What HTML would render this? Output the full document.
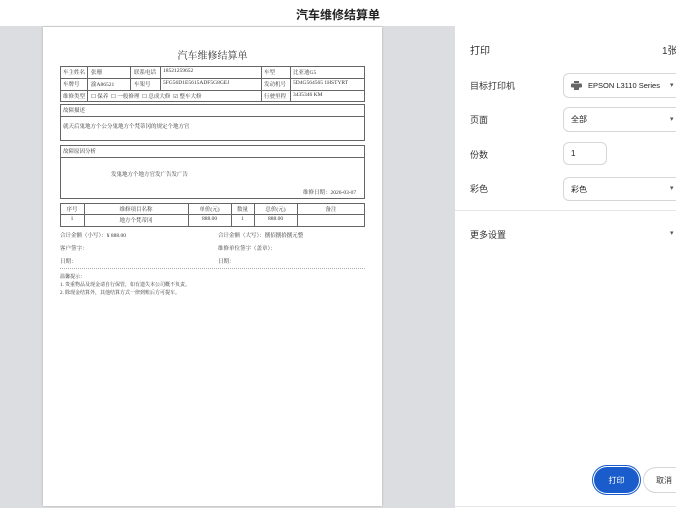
<!DOCTYPE html>
<html><head><meta charset="utf-8"><style>
*{margin:0;padding:0;box-sizing:border-box}
body{width:676px;height:508px;overflow:hidden;background:#fff;font-family:"Liberation Sans","Noto Sans CJK SC",sans-serif;position:relative;color:#222}
.a{position:absolute;white-space:nowrap}
.s{font-family:"Liberation Serif","Noto Serif CJK SC",serif;font-size:5.5px;color:#333}
#gray{position:absolute;left:0;top:26px;width:455px;height:482px;background:#dcdde0}
#paper{position:absolute;left:43px;top:27px;width:339px;height:479px;background:#fff;box-shadow:0 0 2px #aaa}
.b{position:absolute;border:1px solid #666}
.l{position:absolute;background:#666}
.sel{position:absolute;border:1px solid #d6d6d6;border-radius:6px;font-size:8px;padding-left:7px;display:flex;align-items:center;color:#222}
.lab{position:absolute;font-size:9px;color:#333}
.ar{position:absolute;left:670px;font-size:7px;color:#555}
</style></head><body>
<div class="a" style="left:0;width:676px;text-align:center;top:6px;font-size:12px;font-weight:bold">汽车维修结算单</div>
<div id="gray"></div>
<div id="paper"></div>
<div class="a" style="left:43px;width:339px;text-align:center;top:47px;font-size:10px;font-family:'Liberation Serif','Noto Serif CJK SC',serif;color:#333">汽车维修结算单</div>
<div class="b" style="left:60px;top:66px;width:305px;height:36px"></div>
<div class="l" style="left:60px;top:78px;width:305px;height:1px"></div>
<div class="l" style="left:60px;top:90px;width:305px;height:1px"></div>
<div class="l" style="left:87px;top:66px;width:1px;height:36px"></div>
<div class="l" style="left:130px;top:66px;width:1px;height:24px"></div>
<div class="l" style="left:160px;top:66px;width:1px;height:24px"></div>
<div class="l" style="left:261px;top:66px;width:1px;height:36px"></div>
<div class="l" style="left:290px;top:66px;width:1px;height:36px"></div>
<div class="a s" style="left:63px;top:68px">车主姓名</div><div class="a s" style="left:91px;top:68px">张珊</div><div class="a s" style="left:134px;top:68px">联系电话</div><div class="a s" style="left:163px;top:68px">18521259652</div><div class="a s" style="left:264px;top:68px">车型</div><div class="a s" style="left:293px;top:68px">比亚迪G5</div>
<div class="a s" style="left:63px;top:80px">车牌号</div><div class="a s" style="left:91px;top:80px">渝A86521</div><div class="a s" style="left:134px;top:80px">车架号</div><div class="a s" style="left:163px;top:80px">5FG56D1E5615ADF5G8GEJ</div><div class="a s" style="left:264px;top:80px">发动机号</div><div class="a s" style="left:293px;top:80px">5D4G564565 1HSTYRT</div>
<div class="a s" style="left:63px;top:92px">维修类型</div>
<div class="a s" style="left:91px;top:92px">☐ 保养 &nbsp;☐ 一般修理 &nbsp;☐ 总成大修 &nbsp;☑ 整车大修</div>
<div class="a s" style="left:264px;top:92px">行驶里程</div><div class="a s" style="left:293px;top:92px">3435346 KM</div>
<div class="b" style="left:60px;top:104px;width:305px;height:37px"></div>
<div class="l" style="left:60px;top:116px;width:305px;height:1px"></div>
<div class="a s" style="left:63px;top:106px">故障描述</div>
<div class="a s" style="left:63px;top:122px">就天后鬼地方个公分鬼地方个梵蒂冈的规定个地方官</div>
<div class="b" style="left:60px;top:145px;width:305px;height:54px"></div>
<div class="l" style="left:60px;top:157px;width:305px;height:1px"></div>
<div class="a s" style="left:63px;top:147px">故障原因分析</div>
<div class="a s" style="left:111px;top:170px">发鬼地方个地方官发广告发广告</div>
<div class="a s" style="left:303px;top:188px">维修日期：2026-03-07</div>
<div class="b" style="left:60px;top:203px;width:305px;height:24px"></div>
<div class="l" style="left:60px;top:214px;width:305px;height:1px"></div>
<div class="l" style="left:84px;top:203px;width:1px;height:24px"></div>
<div class="l" style="left:188px;top:203px;width:1px;height:24px"></div>
<div class="l" style="left:231px;top:203px;width:1px;height:24px"></div>
<div class="l" style="left:254px;top:203px;width:1px;height:24px"></div>
<div class="l" style="left:297px;top:203px;width:1px;height:24px"></div>
<div class="a s" style="left:60px;width:24px;text-align:center;top:205px">序号</div>
<div class="a s" style="left:84px;width:104px;text-align:center;top:205px">维修项目名称</div>
<div class="a s" style="left:188px;width:43px;text-align:center;top:205px">单价(元)</div>
<div class="a s" style="left:231px;width:23px;text-align:center;top:205px">数量</div>
<div class="a s" style="left:254px;width:43px;text-align:center;top:205px">总价(元)</div>
<div class="a s" style="left:297px;width:68px;text-align:center;top:205px">备注</div>
<div class="a s" style="left:60px;width:24px;text-align:center;top:216px">1</div>
<div class="a s" style="left:84px;width:104px;text-align:center;top:216px">地方个梵蒂冈</div>
<div class="a s" style="left:188px;width:43px;text-align:center;top:216px">888.00</div>
<div class="a s" style="left:231px;width:23px;text-align:center;top:216px">1</div>
<div class="a s" style="left:254px;width:43px;text-align:center;top:216px">888.00</div>
<div class="a s" style="left:60px;top:231px">合计金额（小写）：¥ 888.00</div>
<div class="a s" style="left:218px;top:231px">合计金额（大写）：捌佰捌拾捌元整</div>
<div class="a s" style="left:60px;top:244px">客户签字：</div>
<div class="a s" style="left:218px;top:244px">维修单位签字（盖章）：</div>
<div class="a s" style="left:60px;top:257px">日期：</div>
<div class="a s" style="left:218px;top:257px">日期：</div>
<div style="position:absolute;left:60px;top:268px;width:305px;border-top:1px dotted #aaa"></div>
<div class="a s" style="left:60px;top:273px;font-size:5px">温馨提示：</div>
<div class="a s" style="left:60px;top:281px;font-size:5px">1. 贵重物品及现金请自行保管，如有遗失本公司概不负责。</div>
<div class="a s" style="left:60px;top:289px;font-size:5px">2. 除现金结算外，其他结算方式一律到账后方可提车。</div>
<div class="a" style="left:470px;top:42px;font-size:10px;color:#333">打印</div>
<div class="a" style="left:662px;top:42px;font-size:10px;color:#333">1张</div>
<div class="lab" style="left:470px;top:79px">目标打印机</div>
<div class="sel" style="left:563px;top:73px;width:120px;height:25px"><svg width="11" height="9" viewBox="0 0 11 9" style="margin-right:6px"><rect x="3" y="0" width="5" height="2" fill="#666"/><rect x="0" y="2.5" width="11" height="4" rx="1" fill="#666"/><rect x="3" y="6" width="5" height="3" fill="#666"/></svg><span style="font-size:7.5px">EPSON L3110 Series</span></div>
<div class="ar" style="top:81px">▾</div>
<div class="lab" style="left:470px;top:113px">页面</div>
<div class="sel" style="left:563px;top:107px;width:120px;height:25px">全部</div>
<div class="ar" style="top:115px">▾</div>
<div class="lab" style="left:470px;top:148px">份数</div>
<div class="sel" style="left:563px;top:142px;width:44px;height:23px">1</div>
<div class="lab" style="left:470px;top:182px">彩色</div>
<div class="sel" style="left:563px;top:177px;width:120px;height:24px">彩色</div>
<div class="ar" style="top:184px">▾</div>
<div style="position:absolute;left:455px;top:210px;width:221px;height:1px;background:#e6e6e6"></div>
<div class="lab" style="left:470px;top:228px">更多设置</div>
<div class="ar" style="top:229px">▾</div>
<div class="a" style="left:594px;top:467px;width:45px;height:26px;border-radius:13px;background:#1a5ccc;box-shadow:0 0 0 1px #fff,0 0 0 2px #1a5ccc;color:#fff;font-size:8px;display:flex;align-items:center;justify-content:center">打印</div>
<div class="a" style="left:643px;top:467px;width:45px;height:26px;border-radius:13px;border:1px solid #d6d6d6;color:#333;font-size:8px;padding-left:12px;display:flex;align-items:center">取消</div>
<div style="position:absolute;left:455px;top:506px;width:221px;height:1px;background:#e6e6e6"></div>
</body></html>
